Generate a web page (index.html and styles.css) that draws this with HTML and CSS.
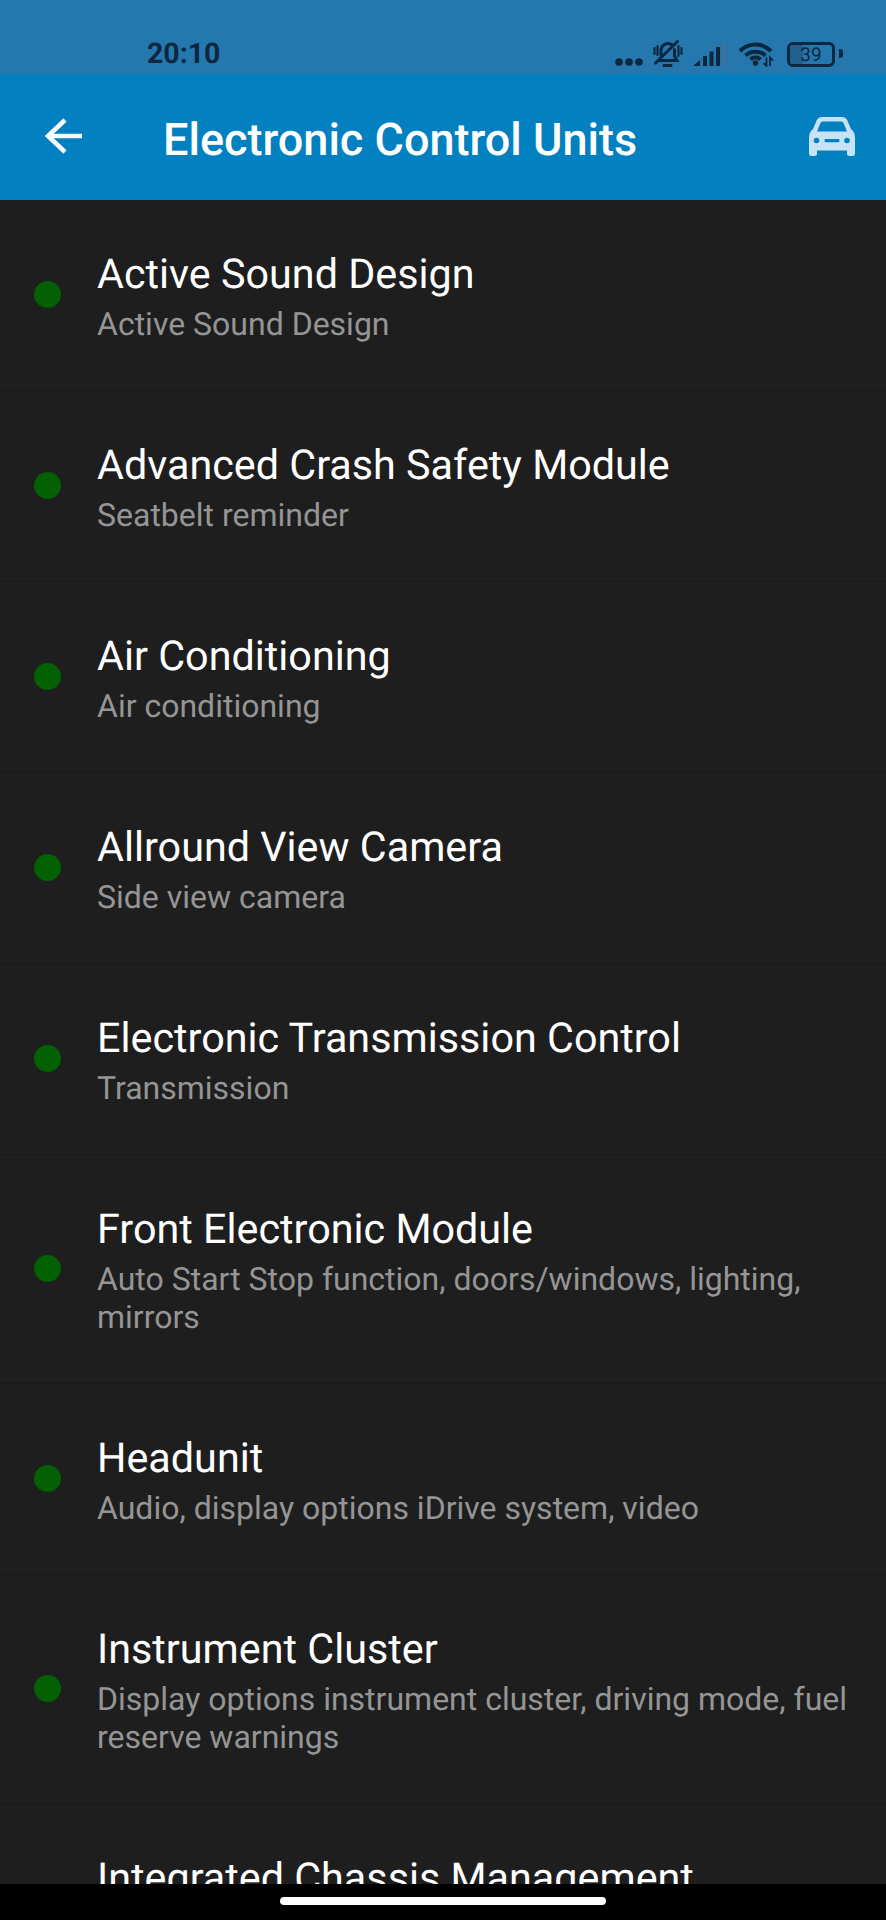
FILE: index.html
```html
<!DOCTYPE html>
<html lang="en">
<head>
<meta charset="utf-8">
<title>Electronic Control Units</title>
<link rel="stylesheet" href="styles.css">
</head>
<body>
<div class="screen">
  <header class="status">
    <span class="clock">20:10</span>
    <div class="status-icons">
      <svg class="ic-dots" viewBox="0 0 28 8" width="28" height="8"><circle cx="4" cy="4" r="3.800"/><circle cx="14" cy="4" r="3.800"/><circle cx="24" cy="4" r="3.800"/></svg>
      <svg class="ic-bell" viewBox="0 0 30 28" width="30" height="28"><path class="line" d="M8 15 V11 A7 7 0 0 1 18.500 4.500 M21.500 9.500 V16 L24 20.500 H6.500 M11 25.500 H18"/><path class="line thin" d="M1.500 8 V14 M4.500 6 V15 M25.500 6 V16 M28.500 8 V14"/><path class="line" d="M2.500 23 L24.500 1.500"/></svg>
      <svg class="ic-signal" viewBox="0 0 33 24" width="33" height="24"><path d="M0 24 L7 18 V24 Z M10 14 H14 V24 H10 Z M16.500 9.500 H20.500 V24 H16.500 Z M23 5 H27 V24 H23 Z"/><path class="dim" d="M29 0.500 H33 V24 H29 Z"/></svg>
      <svg class="ic-wifi" viewBox="0 0 36 26" width="36" height="26"><path class="line wave" d="M2 10 A22 22 0 0 1 33 10 M7.500 14.500 A15 15 0 0 1 27.500 14.500 M12.500 18.500 A7.500 7.500 0 0 1 22.500 18.500"/><circle cx="17.500" cy="22" r="2.800"/><path class="line arrows" d="M28.500 16.500 V25 L25.500 22 M32 25 V16.500 L35 19.500"/></svg>
      <div class="battery"><span class="battery-fill"></span><span class="battery-num">39</span></div>
    </div>
  </header>

  <div class="toolbar">
    <svg class="back" viewBox="0 0 40 36" width="40" height="36"><path d="M38 18 H5 M21 2 L4 18 L21 34" /></svg>
    <h1 class="title">Electronic Control Units</h1>
    <svg class="car" viewBox="0 0 46 39" width="46" height="39"><path d="M7 5 Q8.500 0 13 0 H33 Q37.500 0 39 5 L42 12 Q46 15 46 21 V36.500 Q46 39 43.500 39 H40.500 Q38 39 38 36.500 V33.500 H8 V36.500 Q8 39 5.500 39 H2.500 Q0 39 0 36.500 V21 Q0 15 4 12 Z M8 14.500 H38 L34.500 6 Q34 4.500 32.500 4.500 H13.500 Q12 4.500 11.500 6 Z"/><circle class="car-hole" cx="7.500" cy="23.500" r="2.800"/><circle class="car-hole" cx="38" cy="23.500" r="2.800"/><rect class="car-hole" x="15.500" y="22" width="15" height="3.200" rx="1.200"/></svg>
  </div>

  <main class="list">
    <div class="row"><span class="dot"></span><div class="text"><div class="name">Active Sound Design</div><div class="desc">Active Sound Design</div></div></div>
    <div class="row"><span class="dot"></span><div class="text"><div class="name">Advanced Crash Safety Module</div><div class="desc">Seatbelt reminder</div></div></div>
    <div class="row"><span class="dot"></span><div class="text"><div class="name">Air Conditioning</div><div class="desc">Air conditioning</div></div></div>
    <div class="row"><span class="dot"></span><div class="text"><div class="name">Allround View Camera</div><div class="desc">Side view camera</div></div></div>
    <div class="row"><span class="dot"></span><div class="text"><div class="name">Electronic Transmission Control</div><div class="desc">Transmission</div></div></div>
    <div class="row"><span class="dot"></span><div class="text"><div class="name">Front Electronic Module</div><div class="desc">Auto Start Stop function, doors/windows, lighting, mirrors</div></div></div>
    <div class="row"><span class="dot"></span><div class="text"><div class="name">Headunit</div><div class="desc">Audio, display options iDrive system, video</div></div></div>
    <div class="row"><span class="dot"></span><div class="text"><div class="name">Instrument Cluster</div><div class="desc">Display options instrument cluster, driving mode, fuel reserve warnings</div></div></div>
    <div class="row row-last"><span class="dot"></span><div class="text"><div class="name">Integrated Chassis Management</div></div></div>
  </main>

  <footer class="navbar"><span class="home-pill"></span></footer>
</div>
</body>
</html>
```

FILE: styles.css
```css
html, body {
  margin: 0;
  padding: 0;
  background: #1e1e1e;
}

.screen {
  width: 886px;
  height: 1920px;
  display: flex;
  flex-direction: column;
  overflow: hidden;
  font-family: Roboto, "Liberation Sans", sans-serif;
  text-rendering: geometricPrecision;
  background: #1e1e1e;
}

/* System status bar */
.status {
  flex: 0 0 74px;
  box-sizing: border-box;
  background: #2578ae;
  color: #0c2740;
  display: flex;
  align-items: center;
  justify-content: space-between;
  padding: 34px 51px 0 147px;
}

.clock {
  font-size: 28.500px;
  font-weight: 700;
  line-height: 40px;
}

.status-icons {
  display: flex;
  align-items: center;
  gap: 10px;
  fill: #0c2740;
}

.line {
  fill: none;
  stroke: #0c2740;
  stroke-width: 3;
  stroke-linecap: round;
}

.line.thin { stroke-width: 2.200; }
.line.wave { stroke-width: 4; stroke-linecap: butt; }
.line.arrows { stroke-width: 1.800; stroke-linecap: butt; }
.dim { fill: #3d739c; }

.ic-dots { margin-top: 15px; }
.ic-wifi { margin-left: 2px; }

.battery {
  position: relative;
  box-sizing: border-box;
  width: 48px;
  height: 25px;
  margin-left: 3px;
  border: 3.500px solid #0c2740;
  border-radius: 6px;
  display: flex;
  align-items: center;
  justify-content: center;
}

.battery::after {
  content: "";
  position: absolute;
  right: -10.500px;
  top: 4px;
  width: 4px;
  height: 9px;
  border-radius: 0 3px 3px 0;
  background: #0c2740;
}

.battery-fill {
  position: absolute;
  left: 0;
  top: 0;
  bottom: 0;
  width: 32%;
  background: #235f8d;
  border-radius: 2px 0 0 2px;
}

.battery-num {
  position: relative;
  font-size: 19px;
  line-height: 1;
}

/* App bar */
.toolbar {
  flex: 0 0 126px;
  box-sizing: border-box;
  background: #0380bf;
  display: flex;
  align-items: center;
  padding: 0 31px 0 44px;
}

.back {
  fill: none;
  stroke: #f6fbfe;
  stroke-width: 4.500;
  flex: none;
  margin-top: -2px;
}

.title {
  flex: 1;
  margin: 6px 0 0 79px;
  color: #fff;
  font-size: 45px;
  font-weight: 500;
  line-height: 56px;
  white-space: nowrap;
}

.car {
  fill: #c5e3f5;
  fill-rule: evenodd;
  flex: none;
  margin-top: -2px;
}

.car-hole { fill: #0380bf; }

/* Control unit list */
.list {
  flex: 1;
  min-height: 0;
  overflow: hidden;
}

.row {
  box-sizing: border-box;
  min-height: 191px;
  padding: 45px 24px 47px 34px;
  display: flex;
  align-items: center;
  border-bottom: 1px solid #191919;
}

.row-last .text { padding-bottom: 38px; }

.dot {
  flex: none;
  width: 27px;
  height: 27px;
  border-radius: 50%;
  background: #036003;
  margin-right: 36px;
}

.text { flex: 1; min-width: 0; }

.name {
  color: #fff;
  font-size: 41.300px;
  line-height: 60px;
  white-space: nowrap;
}

.desc {
  color: #959595;
  font-size: 32px;
  line-height: 38px;
}

/* Gesture navigation bar */
.navbar {
  flex: 0 0 36px;
  background: #000;
  display: flex;
  justify-content: center;
  padding-top: 13px;
  box-sizing: border-box;
}

.home-pill {
  width: 326px;
  height: 8px;
  border-radius: 4px;
  background: #fff;
}
```
